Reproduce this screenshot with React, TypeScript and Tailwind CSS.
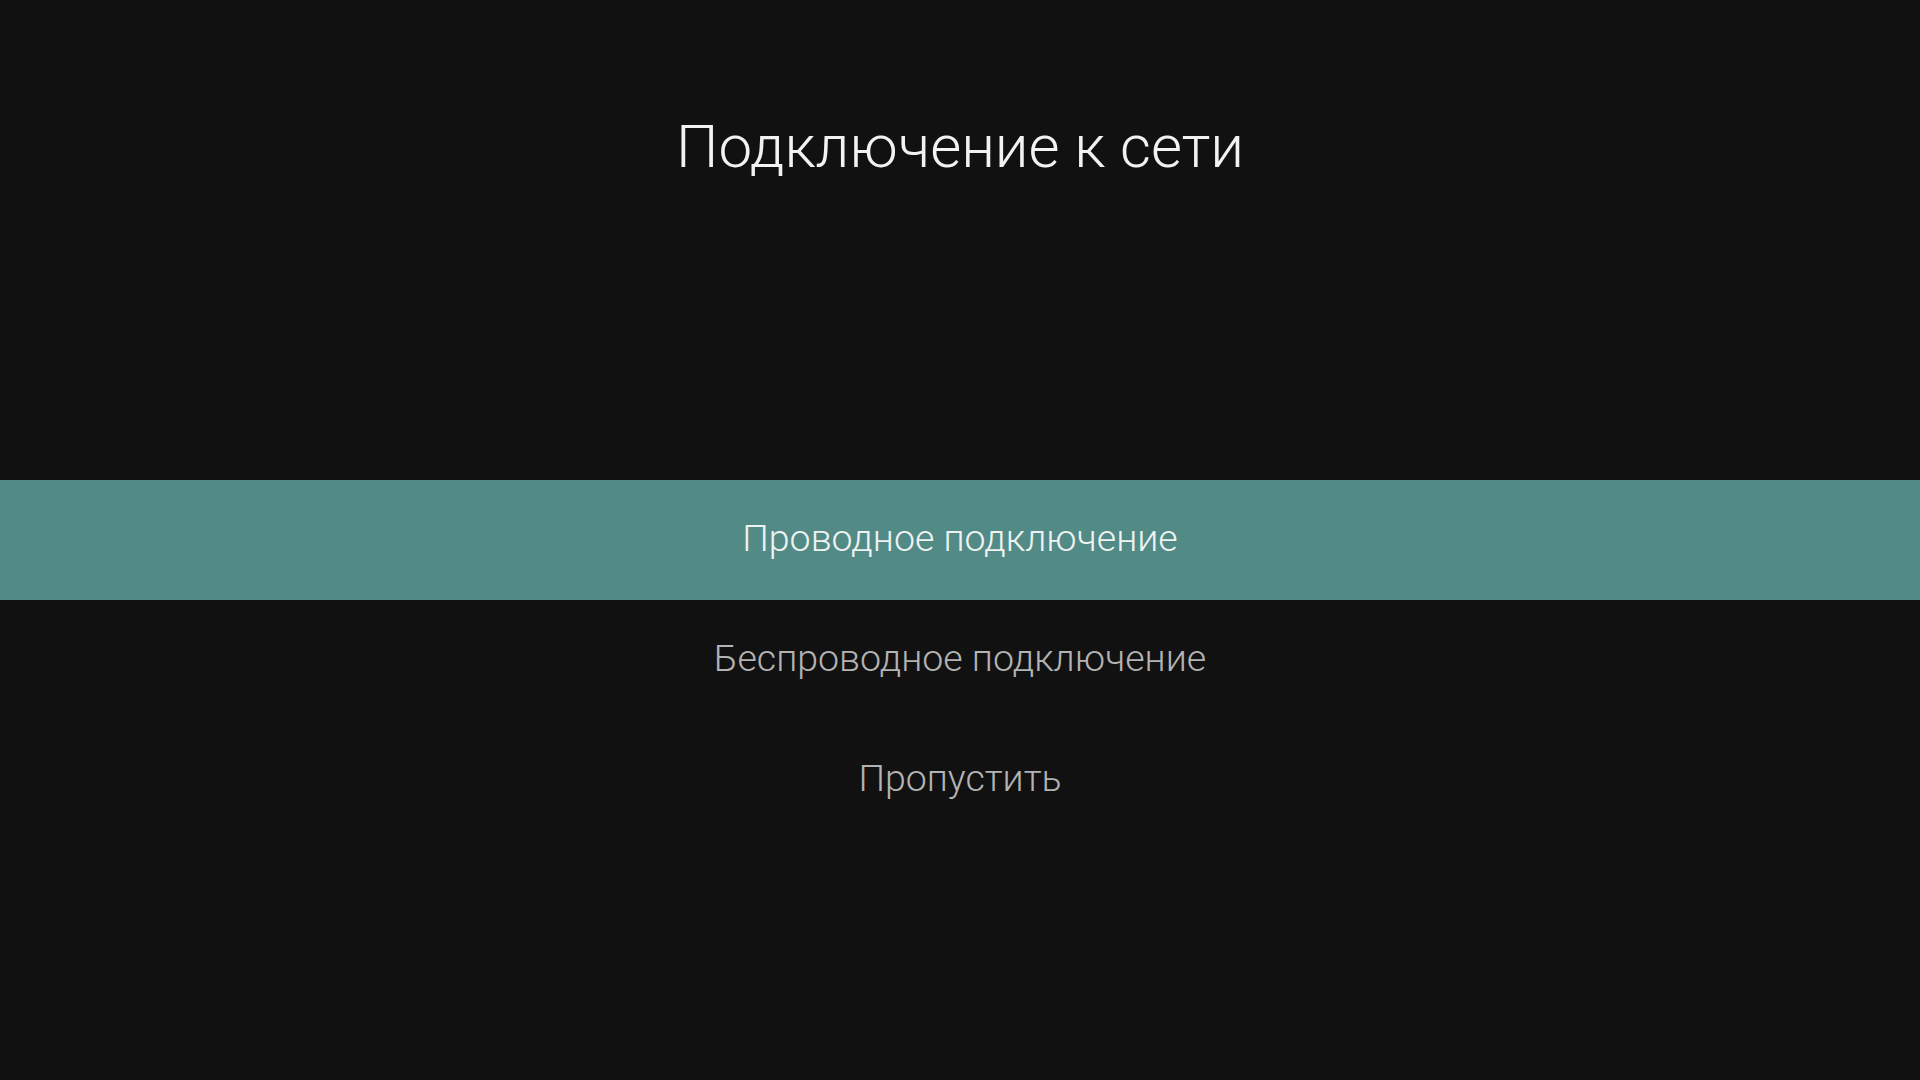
const items = [
  { label: "Проводное подключение", active: true },
  { label: "Беспроводное подключение", active: false },
  { label: "Пропустить", active: false },
];

export default function App() {
  return (
    <div className="h-screen w-full overflow-hidden bg-[#111111] font-['Roboto','Liberation_Sans',sans-serif] font-light">
      <h1 className="pt-[117px] h-[177px] text-center text-[60px] leading-[60px] font-light text-[#f2f2f2]">
        Подключение к сети
      </h1>
      <ul className="mt-[303px]">
        {items.map((item) => (
          <li
            key={item.label}
            className={
              item.active
                ? "flex h-[120px] items-center justify-center pb-[3px] bg-[#528a86] text-[37.5px] text-[#eef3f2]"
                : "flex h-[120px] items-center justify-center pb-[3px] text-[37.5px] text-[#b3b3b3]"
            }
          >
            {item.label}
          </li>
        ))}
      </ul>
    </div>
  );
}
